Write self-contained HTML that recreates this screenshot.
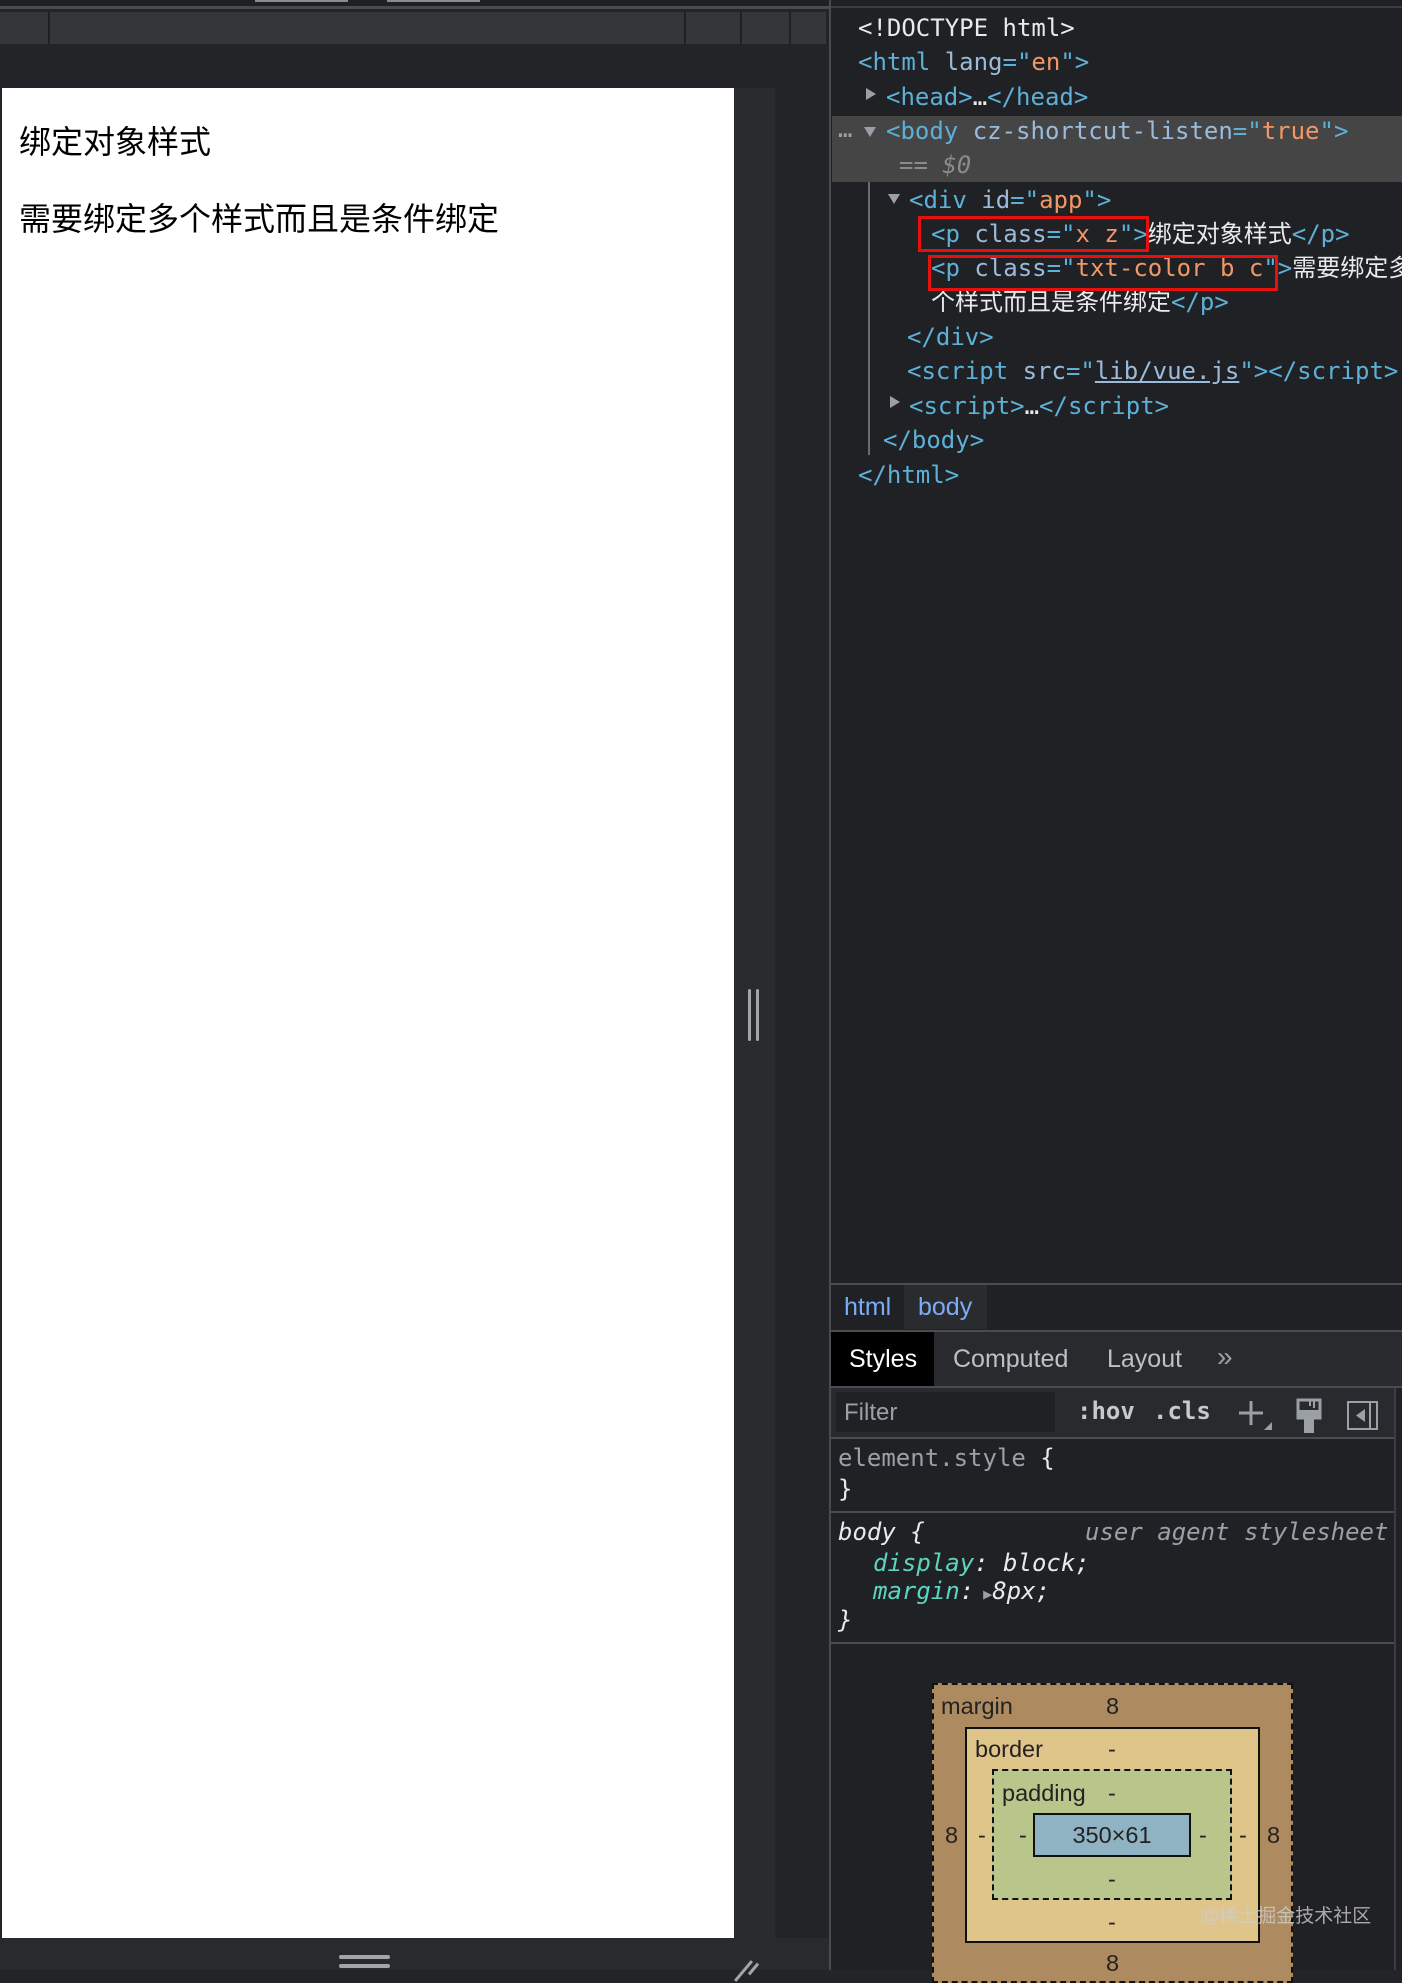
<!DOCTYPE html>
<html><head><meta charset="utf-8">
<style>
*{margin:0;padding:0;box-sizing:border-box}
body{width:1402px;height:1970px;background:#232427;position:relative;overflow:hidden;font-family:"Liberation Sans","Noto Sans CJK SC",sans-serif}
.a{position:absolute}
.m{font-family:"DejaVu Sans Mono","Liberation Mono","Noto Sans CJK SC",monospace;font-size:24px;white-space:pre;line-height:34px;color:#e8eaed}
.t{color:#5db0d7}.n{color:#9bbbdc}.v{color:#f29766}.w{color:#e8eaed}
.cn{font-family:"Liberation Sans","Noto Sans CJK SC",sans-serif}
.tri{position:absolute;width:0;height:0;border-left:6px solid transparent;border-right:6px solid transparent;border-top:10px solid #9aa0a6}
.trir{position:absolute;width:0;height:0;border-top:6px solid transparent;border-bottom:6px solid transparent;border-left:10px solid #9aa0a6}
.hl{position:absolute;height:1px;background:#4a4c50}
.bm{font-family:"Liberation Sans",sans-serif;font-size:23.5px;color:#222;position:absolute;line-height:26px}
.tab{position:absolute;font-size:25px;line-height:30px}
</style></head><body>
<!-- top strip -->
<div class="a" style="left:0;top:0;width:829px;height:6px;background:#1f2023"></div>
<div class="a" style="left:255px;top:0;width:93px;height:2px;background:#8a8b8e"></div>
<div class="a" style="left:387px;top:0;width:93px;height:2px;background:#8a8b8e"></div>
<div class="a" style="left:0;top:6px;width:829px;height:3px;background:#4a4b4e"></div>
<div class="a" style="left:0;top:12px;width:826px;height:32px;background:#35363a"></div>
<div class="a" style="left:48px;top:12px;width:2px;height:32px;background:#202124"></div>
<div class="a" style="left:684px;top:12px;width:2px;height:32px;background:#202124"></div>
<div class="a" style="left:740px;top:12px;width:2px;height:32px;background:#202124"></div>
<div class="a" style="left:789px;top:12px;width:2px;height:32px;background:#202124"></div>
<!-- page -->
<div class="a" style="left:734px;top:88px;width:41px;height:1850px;background:#2a2b2e"></div>
<div class="a" style="left:2px;top:88px;width:732px;height:1850px;background:#fff"></div>
<div class="a cn" style="left:19px;top:122px;font-size:32px;color:#000;line-height:40px">绑定对象样式</div>
<div class="a cn" style="left:19px;top:199px;font-size:32px;color:#000;line-height:40px">需要绑定多个样式而且是条件绑定</div>
<div class="a" style="left:748px;top:989px;width:3px;height:52px;border-radius:2px;background:#a4a5a8"></div>
<div class="a" style="left:756px;top:989px;width:3px;height:52px;border-radius:2px;background:#a4a5a8"></div>
<div class="a" style="left:0;top:1938px;width:829px;height:32px;background:#292a2d"></div>
<div class="a" style="left:339px;top:1955px;width:51px;height:4px;border-radius:2px;background:#a4a5a8"></div>
<div class="a" style="left:339px;top:1964px;width:51px;height:4px;border-radius:2px;background:#a4a5a8"></div>
<div class="a" style="left:742px;top:1958px;width:3px;height:26px;background:#a4a5a8;transform:rotate(40deg)"></div>
<div class="a" style="left:752px;top:1962px;width:3px;height:14px;background:#a4a5a8;transform:rotate(40deg)"></div>
<!-- devtools -->
<div class="a" style="left:829px;top:0;width:2px;height:1970px;background:#4a4b4e"></div>
<div class="a" style="left:831px;top:0;width:571px;height:1970px;background:#202124"></div>
<div class="a" style="left:831px;top:6px;width:571px;height:2px;background:#3c3d40"></div>
<div class="a" style="left:832px;top:116px;width:570px;height:66px;background:#454545"></div>
<div class="a" style="left:868px;top:182px;width:2px;height:273px;background:#6a6b6e"></div>

<div class="a m" style="left:858px;top:11px"><span class="w">&lt;!DOCTYPE html&gt;</span></div>
<div class="a m" style="left:858px;top:45px"><span class="t">&lt;html </span><span class="n">lang</span><span class="t">="</span><span class="v">en</span><span class="t">"&gt;</span></div>
<div class="trir" style="left:866px;top:88px"></div>
<div class="a m" style="left:886px;top:80px"><span class="t">&lt;head&gt;</span><span class="w">…</span><span class="t">&lt;/head&gt;</span></div>
<div class="a m" style="left:838px;top:112px;color:#9aa0a6">…</div>
<div class="tri" style="left:864px;top:127px"></div>
<div class="a m" style="left:886px;top:114px"><span class="t">&lt;body </span><span class="n">cz-shortcut-listen</span><span class="t">="</span><span class="v">true</span><span class="t">"&gt;</span></div>
<div class="a m" style="left:899px;top:148px;color:#8a8b8e;font-style:italic">== $0</div>
<div class="tri" style="left:888px;top:194px"></div>
<div class="a m" style="left:909px;top:183px"><span class="t">&lt;div </span><span class="n">id</span><span class="t">="</span><span class="v">app</span><span class="t">"&gt;</span></div>
<div class="a m" style="left:931px;top:217px"><span class="t">&lt;p </span><span class="n">class</span><span class="t">="</span><span class="v">x z</span><span class="t">"&gt;</span><span class="w cn">绑定对象样式</span><span class="t">&lt;/p&gt;</span></div>
<div class="a m" style="left:931px;top:251px"><span class="t">&lt;p </span><span class="n">class</span><span class="t">="</span><span class="v">txt-color b c</span><span class="t">"&gt;</span><span class="w cn">需要绑定多</span></div>
<div class="a m" style="left:931px;top:285px"><span class="w cn">个样式而且是条件绑定</span><span class="t">&lt;/p&gt;</span></div>
<div class="a" style="left:918px;top:216px;width:231px;height:36px;border:3px solid #e8100f"></div>
<div class="a" style="left:928px;top:255px;width:350px;height:36px;border:3px solid #e8100f"></div>
<div class="a m" style="left:907px;top:320px"><span class="t">&lt;/div&gt;</span></div>
<div class="a m" style="left:907px;top:354px"><span class="t">&lt;script </span><span class="n">src</span><span class="t">="</span><span style="color:#9bbbdc;text-decoration:underline">lib/vue.js</span><span class="t">"&gt;&lt;/script&gt;</span></div>
<div class="trir" style="left:890px;top:396px"></div>
<div class="a m" style="left:909px;top:389px"><span class="t">&lt;script&gt;</span><span class="w">…</span><span class="t">&lt;/script&gt;</span></div>
<div class="a m" style="left:883px;top:423px"><span class="t">&lt;/body&gt;</span></div>
<div class="a m" style="left:858px;top:458px"><span class="t">&lt;/html&gt;</span></div>

<!-- breadcrumb -->
<div class="hl" style="left:831px;top:1283px;width:571px;height:2px"></div>
<div class="a" style="left:904px;top:1285px;width:83px;height:44px;background:#2a2b2e"></div>
<div class="tab" style="left:844px;top:1292px;color:#7cacf8">html</div>
<div class="tab" style="left:918px;top:1292px;color:#7cacf8">body</div>
<div class="hl" style="left:831px;top:1330px;width:571px;height:2px"></div>
<div class="a" style="left:831px;top:1332px;width:571px;height:54px;background:#292a2d"></div>
<div class="a" style="left:831px;top:1332px;width:103px;height:54px;background:#000"></div>
<div class="tab" style="left:849px;top:1344px;color:#fff">Styles</div>
<div class="tab" style="left:953px;top:1344px;color:#bdc1c6">Computed</div>
<div class="tab" style="left:1107px;top:1344px;color:#bdc1c6">Layout</div>
<div class="a" style="left:1217px;top:1342px;font-size:28px;color:#9aa0a6;line-height:30px">»</div>
<div class="hl" style="left:831px;top:1386px;width:571px;height:2px"></div>
<div class="a" style="left:831px;top:1388px;width:563px;height:49px;background:#292a2d"></div>
<div class="a" style="left:836px;top:1392px;width:219px;height:40px;background:#202124"></div>
<div class="a" style="left:844px;top:1398px;font-size:24px;color:#9aa0a6;line-height:30px">Filter</div>
<div class="a m" style="left:1077px;top:1394px;color:#c8c9cc;font-weight:bold">:hov</div>
<div class="a m" style="left:1153px;top:1394px;color:#c8c9cc;font-weight:bold">.cls</div>
<svg class="a" style="left:1236px;top:1398px" width="160" height="36" viewBox="0 0 160 36">
 <path d="M3 15H27M15 3V27" stroke="#9aa0a6" stroke-width="3" fill="none"/>
 <path d="M28 32L36 24V32Z" fill="#9aa0a6"/>
 <path d="M62 2H84V20H62Z" fill="none" stroke="#9aa0a6" stroke-width="3"/>
 <path d="M63 12H83V21H63Z M68 21H78V35H68Z" fill="#9aa0a6"/>
 <path d="M78 3V10M74 3V8" stroke="#9aa0a6" stroke-width="2"/>
 <rect x="112" y="4" width="29" height="27" fill="none" stroke="#9aa0a6" stroke-width="2"/>
 <path d="M134 4V31" stroke="#9aa0a6" stroke-width="2"/>
 <path d="M129 11L120 17.5L129 24Z" fill="#9aa0a6"/>
</svg>
<div class="a" style="left:1394px;top:1388px;width:2px;height:582px;background:#3c3d40"></div>
<div class="hl" style="left:831px;top:1437px;width:563px;height:2px"></div>
<div class="a m" style="left:838px;top:1441px;color:#9aa0a6">element.style <span class="w">{</span></div>
<div class="a m" style="left:838px;top:1472px">}</div>
<div class="hl" style="left:831px;top:1511px;width:563px;height:2px"></div>
<div class="a m" style="left:838px;top:1515px;font-style:italic">body {</div>
<div class="a m" style="left:1085px;top:1515px;font-style:italic;color:#9aa0a6">user agent stylesheet</div>
<div class="a m" style="left:873px;top:1546px;font-style:italic"><span style="color:#5cd5c0">display</span>: block;</div>
<div class="a m" style="left:873px;top:1574px;font-style:italic"><span style="color:#5cd5c0">margin</span>:<span style="color:#9aa0a6;font-size:15px"> ▶</span>8px;</div>
<div class="a m" style="left:838px;top:1603px;font-style:italic">}</div>
<div class="hl" style="left:831px;top:1642px;width:563px;height:2px"></div>

<!-- box model -->
<div class="a" style="left:932px;top:1683px;width:361px;height:300px;background:#ad8a60;border:2px dashed #111"></div>
<div class="a" style="left:965px;top:1727px;width:295px;height:216px;background:#dfc58a;border:2px solid #111"></div>
<div class="a" style="left:992px;top:1769px;width:240px;height:131px;background:#b9c68b;border:2px dashed #111"></div>
<div class="a" style="left:1033px;top:1813px;width:158px;height:44px;background:#8fb3c3;border:2px solid #111"></div>
<div class="bm" style="left:941px;top:1693px">margin</div>
<div class="bm" style="left:1106px;top:1693px">8</div>
<div class="bm" style="left:975px;top:1736px">border</div>
<div class="bm" style="left:1108px;top:1736px">-</div>
<div class="bm" style="left:1002px;top:1780px">padding</div>
<div class="bm" style="left:1108px;top:1780px">-</div>
<div class="bm" style="left:1033px;top:1822px;width:158px;text-align:center">350×61</div>
<div class="bm" style="left:945px;top:1822px">8</div>
<div class="bm" style="left:1267px;top:1822px">8</div>
<div class="bm" style="left:978px;top:1822px">-</div>
<div class="bm" style="left:1019px;top:1822px">-</div>
<div class="bm" style="left:1199px;top:1822px">-</div>
<div class="bm" style="left:1239px;top:1822px">-</div>
<div class="bm" style="left:1108px;top:1866px">-</div>
<div class="bm" style="left:1108px;top:1909px">-</div>
<div class="bm" style="left:1106px;top:1950px">8</div>
<div class="a cn" style="left:1200px;top:1904px;font-size:19px;color:rgba(205,205,205,0.8);line-height:26px">@稀土掘金技术社区</div>
</body></html>
